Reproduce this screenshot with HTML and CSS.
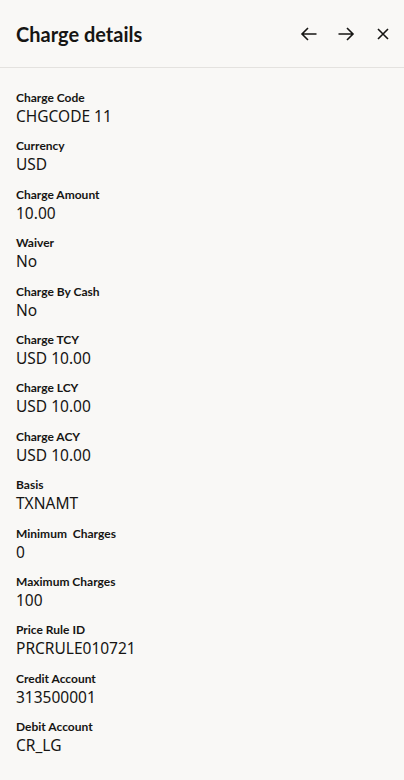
FILE: index.html
```html
<!DOCTYPE html>
<html lang="en">
<head>
<meta charset="utf-8">
<title>Charge details</title>
<link rel="stylesheet" href="styles.css">
</head>
<body>
<div class="panel">
  <header class="header">
    <h1 class="title">Charge details</h1>
    <div class="actions">
      <button class="icon-btn" aria-label="Previous">
        <svg width="18" height="18" viewBox="0 0 18 18"><path d="M16.5 9H2M8 3L2 9l6 6" fill="none" stroke="#161513" stroke-width="1.6"/></svg>
      </button>
      <button class="icon-btn" aria-label="Next">
        <svg width="18" height="18" viewBox="0 0 18 18"><path d="M1.5 9H16M10 3l6 6-6 6" fill="none" stroke="#161513" stroke-width="1.6"/></svg>
      </button>
      <button class="icon-btn close" aria-label="Close">
        <svg width="12" height="12" viewBox="0 0 12 12"><path d="M1 1l10 10M11 1L1 11" fill="none" stroke="#161513" stroke-width="1.6"/></svg>
      </button>
    </div>
  </header>
  <dl class="details">
    <div class="field"><dt>Charge Code</dt><dd>CHGCODE 11</dd></div>
    <div class="field"><dt>Currency</dt><dd>USD</dd></div>
    <div class="field"><dt>Charge Amount</dt><dd>10.00</dd></div>
    <div class="field"><dt>Waiver</dt><dd>No</dd></div>
    <div class="field"><dt>Charge By Cash</dt><dd>No</dd></div>
    <div class="field"><dt>Charge TCY</dt><dd>USD 10.00</dd></div>
    <div class="field"><dt>Charge LCY</dt><dd>USD 10.00</dd></div>
    <div class="field"><dt>Charge ACY</dt><dd>USD 10.00</dd></div>
    <div class="field"><dt>Basis</dt><dd>TXNAMT</dd></div>
    <div class="field"><dt>Minimum&nbsp; Charges</dt><dd>0</dd></div>
    <div class="field"><dt>Maximum Charges</dt><dd>100</dd></div>
    <div class="field"><dt>Price Rule ID</dt><dd>PRCRULE010721</dd></div>
    <div class="field"><dt>Credit Account</dt><dd>313500001</dd></div>
    <div class="field"><dt>Debit Account</dt><dd>CR_LG</dd></div>
  </dl>
</div>
</body>
</html>
```
FILE: styles.css
```css
* { box-sizing: border-box; }
html, body { margin: 0; padding: 0; }
body {
  background: #f9f8f6;
  color: #161513;
  font-family: Lato, "Noto Sans", sans-serif;
  width: 404px;
  height: 780px;
  overflow: hidden;
}
.panel { display: flex; flex-direction: column; }
.header {
  height: 68px;
  display: flex;
  align-items: center;
  justify-content: space-between;
  padding: 0 12px 0 16px;
  border-bottom: 1px solid #e4e2df;
}
.title {
  margin: 0;
  font-size: 20px;
  font-weight: 700;
  line-height: 28px;
}
.actions { display: flex; align-items: center; gap: 19px; }
.icon-btn {
  border: 0;
  background: none;
  padding: 0;
  width: 18px;
  height: 18px;
  display: flex;
  align-items: center;
  justify-content: center;
  cursor: pointer;
}
.details {
  margin: 0;
  padding: 22px 16px 0;
  display: flex;
  flex-direction: column;
  gap: 12.4px;
}
.field { display: flex; flex-direction: column; }
dt {
  font-size: 12px;
  line-height: 16px;
  font-weight: 700;
}
dd {
  margin: 0;
  font-family: "Noto Sans", sans-serif;
  font-size: 15.5px;
  line-height: 20px;
  font-weight: 400;
}
```
